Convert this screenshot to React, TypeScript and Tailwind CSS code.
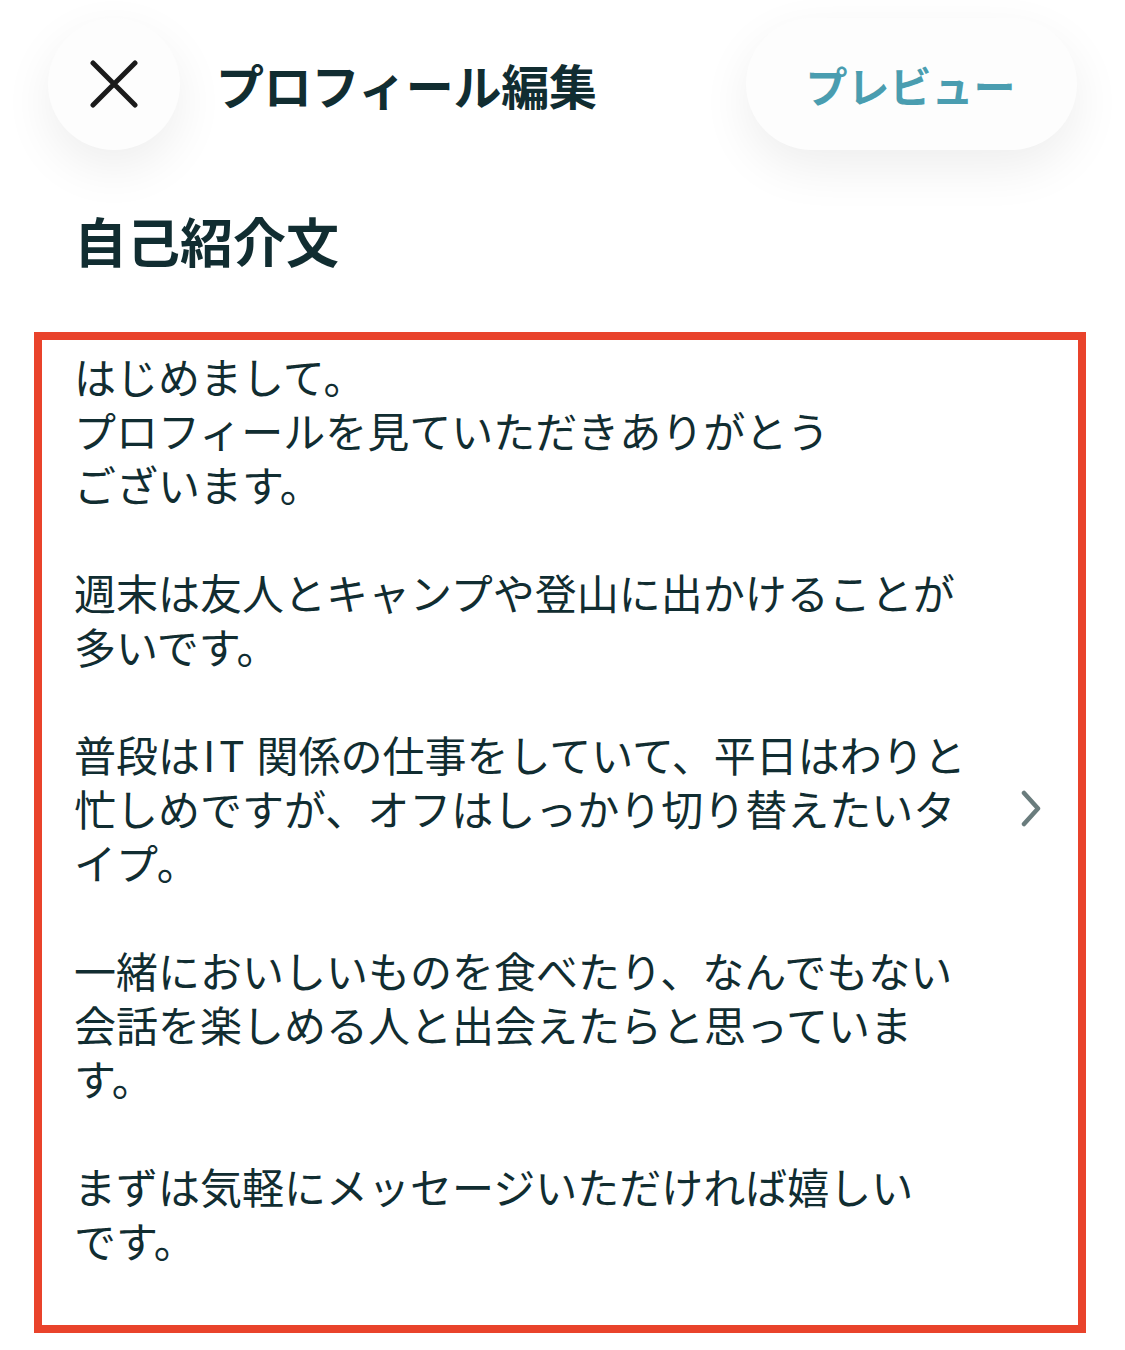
import React from 'react';

const paragraphs: React.ReactNode[][] = [
  ['はじめまして。', 'プロフィールを見ていただきありがとう', 'ございます。'],
  ['週末は友人とキャンプや登山に出かけることが', '多いです。'],
  [
    <>
      普段は<span className="ml-[3px] mr-[8px] tracking-[4px]">IT</span>関係の仕事をしていて、平日はわりと
    </>,
    '忙しめですが、オフはしっかり切り替えたいタ',
    'イプ。',
  ],
  ['一緒においしいものを食べたり、なんでもない', '会話を楽しめる人と出会えたらと思っていま', 'す。'],
  ['まずは気軽にメッセージいただければ嬉しい', 'です。'],
];

function CloseIcon() {
  return (
    <svg width="48" height="48" viewBox="0 0 48 48" fill="none">
      <path d="M3 3L45 45M45 3L3 45" stroke="#1b1b1b" strokeWidth="5" strokeLinecap="round" />
    </svg>
  );
}

function Chevron() {
  return (
    <svg width="20" height="37" viewBox="0 0 20 37" fill="none">
      <path d="M3 3L17 18.5L3 34" stroke="#6a7c7d" strokeWidth="4.5" strokeLinecap="round" strokeLinejoin="round" />
    </svg>
  );
}

export default function App() {
  return (
    <div className="w-[1125px] h-[1350px] bg-white overflow-hidden font-['Noto_Sans_CJK_JP',sans-serif] text-[#112d31]">
      {/* Top bar */}
      <header className="flex items-center px-[48px] pt-[18px]">
        <button className="w-[132px] h-[132px] rounded-full bg-[#fdfdfd] shadow-[0_18px_50px_rgba(0,0,0,0.07)] flex items-center justify-center">
          <CloseIcon />
        </button>
        <h1 className="ml-[36px] text-[48px] leading-none font-bold tracking-[-0.3px]">プロフィール編集</h1>
        <button className="ml-auto w-[331px] h-[132px] rounded-full bg-[#fdfdfd] shadow-[0_18px_50px_rgba(0,0,0,0.07)] flex items-center justify-center text-[42px] font-bold text-[#4a9db0] pr-[2px]">
          プレビュー
        </button>
      </header>

      {/* Section title */}
      <h2 className="mt-[58px] pl-[74px] text-[53px] leading-[64px] font-bold">自己紹介文</h2>

      {/* Bio field */}
      <div className="mt-[60px] ml-[34px] w-[1052px] h-[1001px] border-[8px] border-[#e9432b] pt-[9px] pl-[32px] pr-[37px]">
        <div className="flex items-center">
          <div className="flex-1 flex flex-col gap-[54px] text-[42px] leading-[54px]">
            {paragraphs.map((lines, i) => (
              <div key={i}>
                {lines.map((line, j) => (
                  <div key={j} className="whitespace-nowrap">{line}</div>
                ))}
              </div>
            ))}
          </div>
          <Chevron />
        </div>
      </div>
    </div>
  );
}
